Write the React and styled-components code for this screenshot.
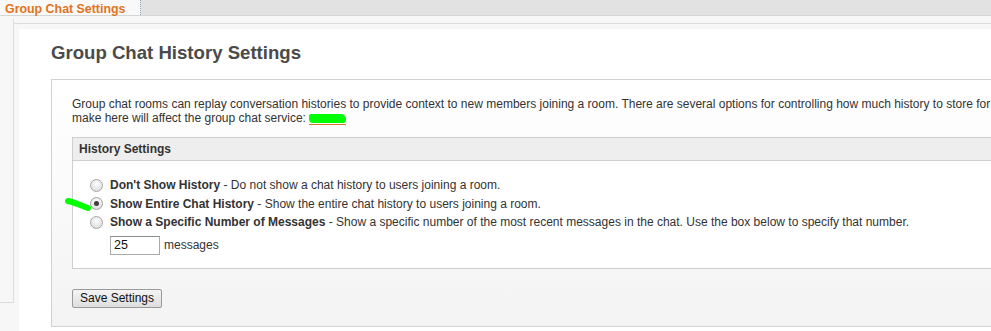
import React from 'react';
import styled, { createGlobalStyle } from 'styled-components';

const GlobalStyle = createGlobalStyle`
    html, body {
        margin: 0;
        padding: 0;
        overflow: hidden;
        background: #fff;
        font-family: "Liberation Sans", Arial, sans-serif;
        font-size: 12px;
        color: #333;
    }
`;

const Page = styled.div`
    width: 991px;
    height: 331px;
    overflow: hidden;
    display: flex;
    flex-direction: column;
    background: #f7f7f7;
`;

const TopBar = styled.div`
    display: flex;
    height: 15px;
    background: #e2e2e2;
    border-bottom: 1px solid #d6d6d6;
`;

const Tab = styled.div`
    width: 135px;
    padding: 3px 0 0 5px;
    background: #f9f9f9;
    border-right: 1px dotted #8a9aa6;
    color: #e0731c;
    font-weight: bold;
    font-size: 12.4px;
    line-height: 12px;
`;

const Body = styled.div`
    flex: 1;
    display: flex;
    padding-top: 3px;
`;

const Sidebar = styled.div`
    width: 13px;
    height: 283px;
    flex-shrink: 0;
    border-right: 1px solid #dcdcdc;
    border-bottom: 1px solid #dcdcdc;
`;

const Main = styled.div`
    flex: 1;
    display: flex;
    margin-top: 4px;
    border-top: 1px solid #dcdcdc;
    padding: 5px 0 0 5px;
`;

const Content = styled.div`
    flex: 1;
    background: #fff;
    padding: 11px 0 0 32px;
`;

const Title = styled.h1`
    margin: 0 0 13px;
    font-size: 18.6px;
    line-height: 26px;
    font-weight: bold;
    color: #4a4a4a;
`;

const OuterBox = styled.div`
    width: 1100px;
    border: 1px solid #d2d2d2;
    background: linear-gradient(#ffffff 0%, #fbfbfb 40%, #f3f3f3 100%);
    padding: 17px 0 18px 20px;
`;

const Intro = styled.p`
    margin: 0 0 12px;
    line-height: 14px;
    white-space: nowrap;
`;

const Redacted = styled.span`
    position: relative;
    display: inline-block;
    width: 37px;
    height: 9px;
    margin-left: 3px;
    vertical-align: -1px;
    background: #00ff00;
    border-radius: 2px 5px 3px 4px;

    &::after {
        content: '';
        position: absolute;
        left: 0;
        right: 0;
        bottom: -2px;
        height: 1px;
        background: #d9762a;
    }
`;

const SettingsBox = styled.div`
    width: 1020px;
    border: 1px solid #cfcfcf;
    background: #fff;
`;

const BoxHeader = styled.div`
    height: 22px;
    line-height: 22px;
    padding-left: 6px;
    background: #eeeeee;
    border-bottom: 1px solid #cfcfcf;
    font-weight: bold;
`;

const BoxBody = styled.div`
    padding: 15px 0 13px 17px;
`;

const OptionRow = styled.label`
    position: relative;
    display: flex;
    align-items: center;
    gap: 7px;
    height: 18.5px;
    white-space: nowrap;
`;

const Radio = styled.span`
    width: 11px;
    height: 11px;
    flex-shrink: 0;
    border-radius: 50%;
    border: 1px solid #a6a6a6;
    background: radial-gradient(circle at 50% 35%, #fdfdfd 0%, #e6e6e6 60%, #d2d2d2 100%);
    display: flex;
    align-items: center;
    justify-content: center;

    &::after {
        content: '';
        width: 5px;
        height: 5px;
        border-radius: 50%;
        background: ${({ checked }) => (checked ? '#3d3d3d' : 'transparent')};
    }
`;

const Strong = styled.b`
    font-weight: bold;
`;

const Mark = styled.svg`
    position: absolute;
    left: -25px;
    top: 2px;
`;

const CountRow = styled.div`
    display: flex;
    align-items: center;
    gap: 4px;
    margin: 4px 0 0 20px;
`;

const CountInput = styled.input`
    box-sizing: border-box;
    width: 50px;
    height: 19px;
    padding: 0 3px;
    border: 1px solid #a9a9a9;
    border-top-color: #8e8e8e;
    font-family: "Liberation Sans", Arial, sans-serif;
    font-size: 12.5px;
    color: #111;
    outline: none;
`;

const SaveButton = styled.button`
    box-sizing: border-box;
    margin-top: 20px;
    width: 90px;
    height: 19px;
    padding: 0;
    border: 1px solid #9a9a9a;
    border-radius: 2px;
    background: linear-gradient(#f4f4f4, #dedede);
    font-family: "Liberation Sans", Arial, sans-serif;
    font-size: 12px;
    color: #111;
`;

const options = [
    {
        label: "Don't Show History",
        text: 'Do not show a chat history to users joining a room.',
    },
    {
        label: 'Show Entire Chat History',
        text: 'Show the entire chat history to users joining a room.',
        checked: true,
        marked: true,
    },
    {
        label: 'Show a Specific Number of Messages',
        text: 'Show a specific number of the most recent messages in the chat. Use the box below to specify that number.',
    },
];

export default function App() {
    return (
        <>
            <GlobalStyle />
            <Page>
                <TopBar>
                    <Tab>Group Chat Settings</Tab>
                </TopBar>
                <Body>
                    <Sidebar />
                    <Main>
                        <Content>
                            <Title>Group Chat History Settings</Title>
                            <OuterBox>
                                <Intro>
                                    Group chat rooms can replay conversation histories to provide context to new
                                    members joining a room. There are several options for controlling how much
                                    history to store for each room. The settings you
                                    <br />
                                    make here will affect the group chat service:
                                    <Redacted />
                                </Intro>
                                <SettingsBox>
                                    <BoxHeader>History Settings</BoxHeader>
                                    <BoxBody>
                                        {options.map(opt => (
                                            <OptionRow key={opt.label}>
                                                {opt.marked && (
                                                    <Mark width="28" height="16" viewBox="0 0 28 16">
                                                        <path
                                                            d="M3 4 C9 5 15 8 23 11"
                                                            stroke="#00ff00"
                                                            strokeWidth="6"
                                                            strokeLinecap="round"
                                                            fill="none"
                                                        />
                                                    </Mark>
                                                )}
                                                <Radio checked={opt.checked} />
                                                <span>
                                                    <Strong>{opt.label}</Strong> - {opt.text}
                                                </span>
                                            </OptionRow>
                                        ))}
                                        <CountRow>
                                            <CountInput defaultValue="25" />
                                            <span>messages</span>
                                        </CountRow>
                                    </BoxBody>
                                </SettingsBox>
                                <SaveButton>Save Settings</SaveButton>
                            </OuterBox>
                        </Content>
                    </Main>
                </Body>
            </Page>
        </>
    );
}
